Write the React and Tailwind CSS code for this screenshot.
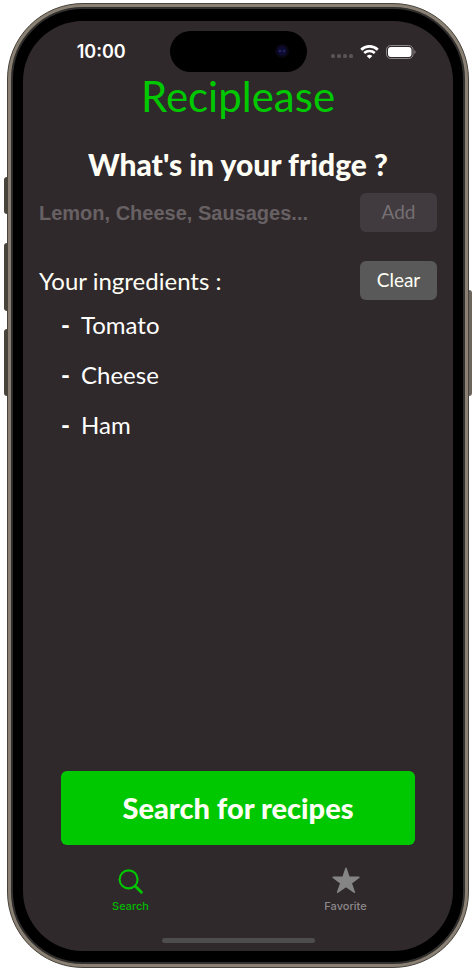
import React, { useState } from 'react';

function StatusBar() {
  return (
    <div className="grid grid-cols-[1fr_137px_1fr] items-center pt-[10px] font-[Inter,sans-serif]">
      <div className="pl-[10px] text-center text-[18px] leading-5 font-semibold text-white">10:00</div>
      <div className="flex h-[41px] items-center justify-end rounded-full bg-black pr-[17px]">
        <svg className="size-4" viewBox="0 0 16 16" aria-hidden="true">
          <circle cx="8" cy="7" r="7" fill="#090611" />
          <circle cx="8" cy="7" r="5" fill="#0c0b30" />
          <circle cx="6" cy="7" r="1.3" fill="#252460" />
          <circle cx="10" cy="7" r="1.3" fill="#252460" />
        </svg>
      </div>
      <div className="flex items-center justify-center gap-[7px] pr-3">
        <svg className="mt-[9px] h-1 w-[22px]" viewBox="0 0 22 4" fill="#595355" aria-hidden="true">
          <rect x="0" width="4" height="4" rx="1.5" />
          <rect x="6" width="4" height="4" rx="1.5" />
          <rect x="12" width="4" height="4" rx="1.5" />
          <rect x="18" width="4" height="4" rx="1.5" />
        </svg>
        <svg className="h-[14px] w-[19px]" viewBox="0 0 19 14" fill="none" stroke="#fff" aria-hidden="true">
          <path d="M1.2 4.7a12 12 0 0 1 16.6 0" strokeWidth="2.7" />
          <path d="M4.2 8a7.7 7.7 0 0 1 10.6 0" strokeWidth="2.5" />
          <path d="M9.5 13.8 6.7 11a4 4 0 0 1 5.6 0Z" fill="#fff" stroke="none" />
        </svg>
        <svg className="h-[14px] w-[30px]" viewBox="0 0 30 14" fill="none" aria-hidden="true">
          <rect x="0.5" y="0.5" width="26.5" height="13" rx="4.2" stroke="#8c8889" />
          <rect x="2" y="2" width="23.5" height="10" rx="3" fill="#fff" />
          <path d="M28.3 5v4c1.6-.7 1.6-3.3 0-4Z" fill="#8c8889" />
        </svg>
      </div>
    </div>
  );
}

function TabBar() {
  return (
    <nav className="grid grid-cols-2 pt-5 font-[Inter,sans-serif] text-[11px] leading-4 font-medium">
      <button type="button" className="flex flex-col items-center gap-px text-[#0b0]">
        <svg className="h-8 w-[30px]" viewBox="0 0 30 32" fill="none" stroke="#00c800" aria-hidden="true">
          <circle cx="12.6" cy="14.4" r="9" strokeWidth="2.1" />
          <path d="m19.4 21.2 6 6" strokeWidth="2.9" strokeLinecap="round" />
        </svg>
        Search
      </button>
      <button type="button" className="flex flex-col items-center gap-px text-[#8b888a]">
        <svg className="h-8 w-[30px]" viewBox="0 0 30 32" fill="#858585" aria-hidden="true">
          <path
            d="m15 3.4 3 9h9.8l-7.7 5.6 3.2 9.2-8.3-5.8-8.3 5.8L9.9 18l-7.7-5.6H12Z"
            stroke="#858585"
            strokeWidth="1.6"
            strokeLinejoin="round"
          />
        </svg>
        Favorite
      </button>
    </nav>
  );
}

export default function App() {
  const [ingredients, setIngredients] = useState(['Tomato', 'Cheese', 'Ham']);
  const [draft, setDraft] = useState('');

  const add = (event) => {
    event.preventDefault();
    setIngredients([...ingredients, draft.trim()]);
    setDraft('');
  };

  return (
    <div className="flex min-h-screen bg-white px-[7px] pt-[3px] pb-1">
      <div className="relative flex flex-1 rounded-[76px] border border-[#47433c] bg-[#8a8174] p-[3px]">
        <span className="absolute top-[173px] -left-1 h-[37px] w-[3px] rounded-l-sm bg-[#49443a]" />
        <span className="absolute top-[239px] -left-1 h-[68px] w-[3px] rounded-l-sm bg-[#49443a]" />
        <span className="absolute top-[325px] -left-1 h-[67px] w-[3px] rounded-l-sm bg-[#49443a]" />
        <span className="absolute top-[286px] -right-1 h-[106px] w-[3px] rounded-r-sm bg-[#6c655b]" />
        <div className="flex flex-1 rounded-[72px] border-2 border-[#302f2d] bg-black px-[10px] pt-3 pb-[11px]">
          <main className="flex min-w-0 flex-1 flex-col rounded-[60px] bg-[#30292b] font-[Lato,sans-serif] text-[#fffef5]">
            <StatusBar />
            <h1 className="text-center font-[Chalkduster,Lato,cursive] text-[42px] leading-12 text-[#00c800]">
              Reciplease
            </h1>
            <h2 className="pt-6 text-center text-[30px] leading-10 font-black">What's in your fridge ?</h2>
            <form onSubmit={add} className="flex gap-3 px-4 pt-[9px]">
              <input
                aria-label="Ingredients"
                value={draft}
                onChange={(event) => setDraft(event.target.value)}
                placeholder="Lemon, Cheese, Sausages..."
                className="min-w-0 flex-1 bg-transparent font-['Liberation_Sans',sans-serif] text-[20px] font-bold outline-none placeholder:text-[#676164]"
              />
              <button
                type="submit"
                disabled={!draft.trim()}
                className="h-[39px] w-[77px] rounded-md bg-[#413a3e] text-[19px] disabled:text-[#757073]"
              >
                Add
              </button>
            </form>
            <section className="px-4 pt-[29px]">
              <div className="flex items-center justify-between">
                <h3 className="text-[24px] leading-8">Your ingredients :</h3>
                <button
                  type="button"
                  onClick={() => setIngredients([])}
                  className="h-[39px] w-[77px] rounded-md bg-[#595959] text-[19px]"
                >
                  Clear
                </button>
              </div>
              <ul className="pl-[22px] font-[Chalkduster,Lato,cursive] text-[24px] leading-[50px] text-white">
                {ingredients.map((name, index) => (
                  <li key={index} className="flex">
                    <span className="w-5 font-black">-</span>
                    {name}
                  </li>
                ))}
              </ul>
            </section>
            <div className="mt-auto px-[38px]">
              <button
                type="button"
                className="h-[74px] w-full rounded-md bg-[#00c800] text-[29px] font-black"
              >
                Search for recipes
              </button>
            </div>
            <TabBar />
            <div className="mt-6 mb-2 h-[5px] w-[153px] self-center rounded-full bg-[#4d4d4d]" />
          </main>
        </div>
      </div>
    </div>
  );
}
